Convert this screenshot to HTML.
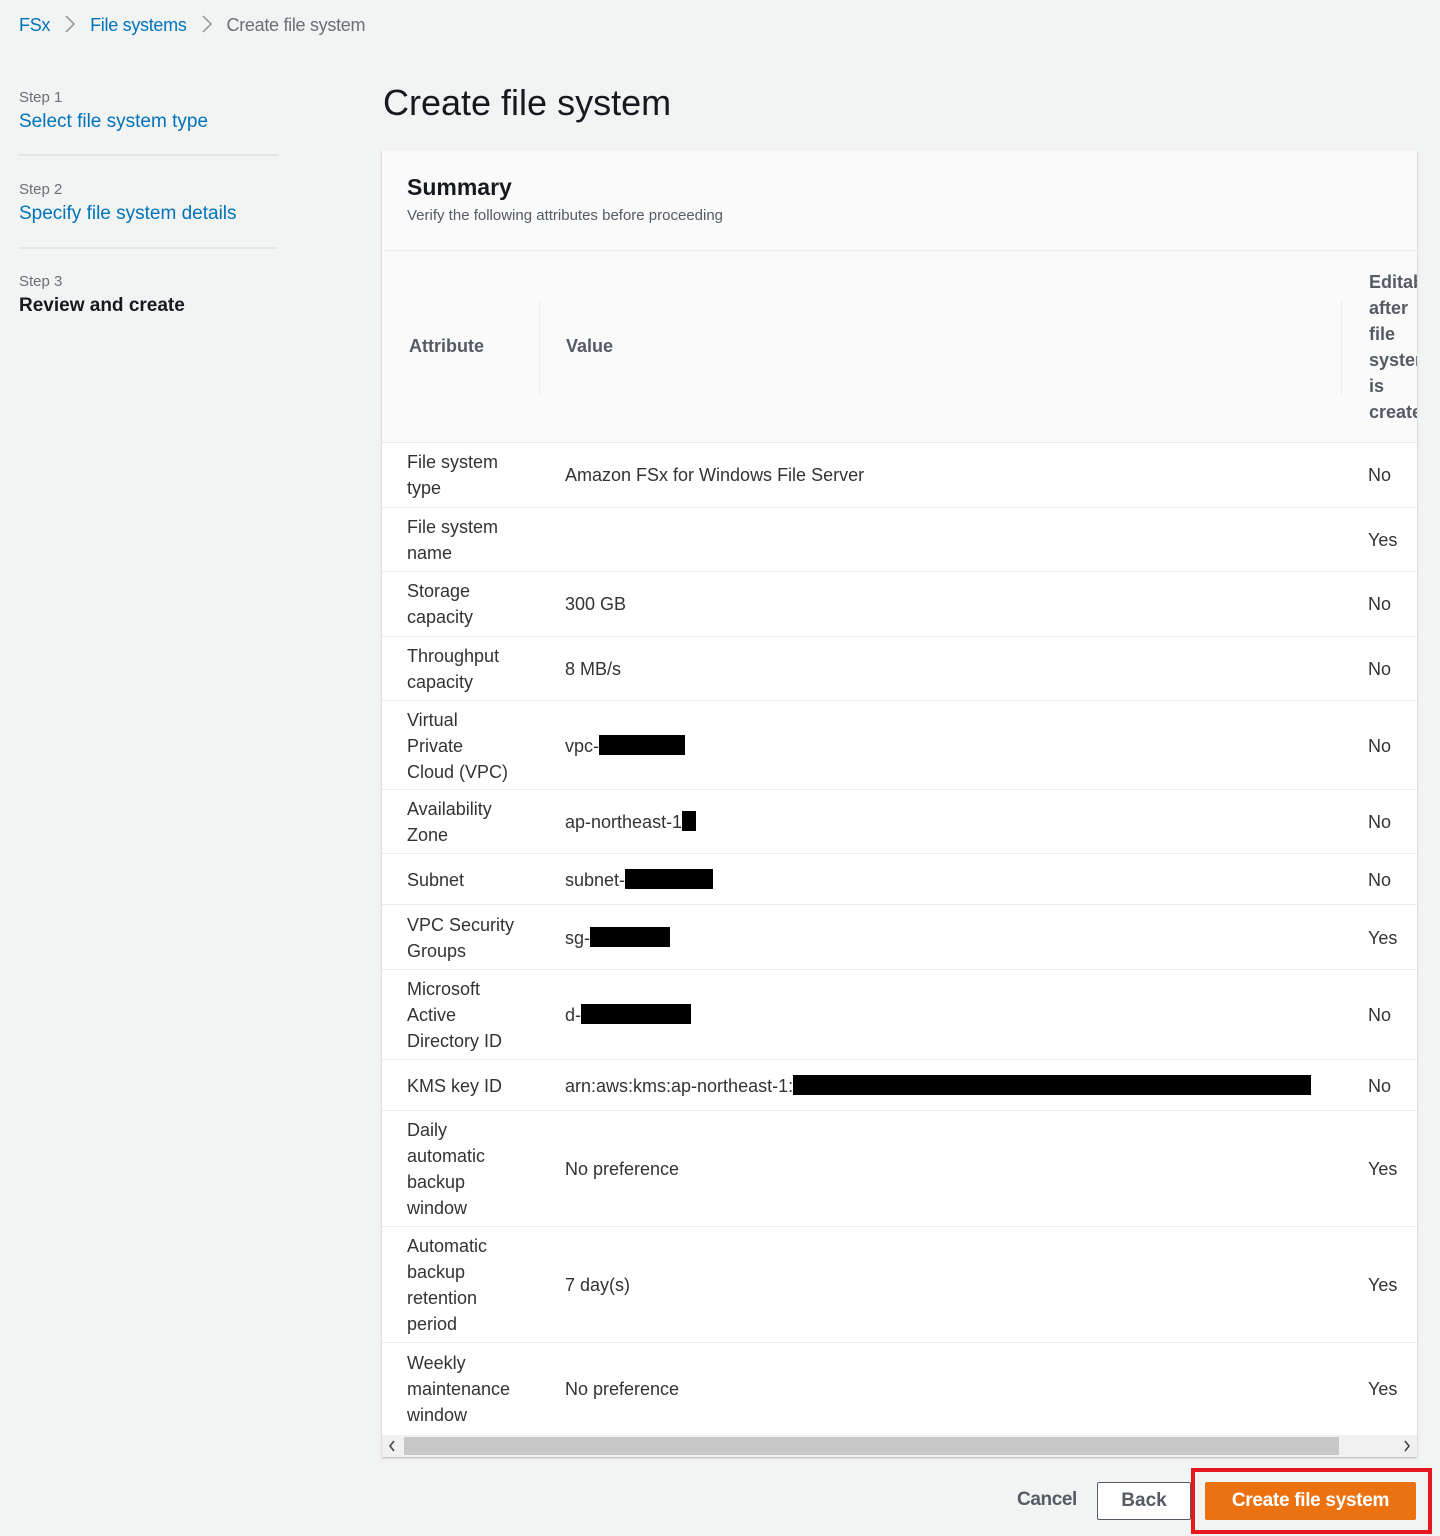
<!DOCTYPE html>
<html><head><style>
body{margin:0;width:1440px;height:1536px;background:#f2f3f3;font-family:"Liberation Sans",sans-serif;color:#16191f;position:relative;overflow:hidden}
.a{position:absolute;white-space:nowrap}
.blue{color:#0073bb}
.card{position:absolute;left:382px;top:150px;width:1035px;height:1307px;background:#fff;box-shadow:0 1px 2px rgba(0,0,0,.25);overflow:hidden}
.row{position:absolute;left:0;width:1035px;border-top:1px solid #eaeded;font-size:18px;color:#333}
.row div{position:absolute;top:50%;transform:translateY(-50%);line-height:26px}
.c1{left:25px}.c2{left:183px}.c3{left:986px}
.blk{display:inline-block;background:#000;height:20px;vertical-align:-3px}
.chev{display:inline-block;vertical-align:-3px;margin:0 14px}
</style></head><body>
<div class="a" style="left:19px;top:14px;font-size:18px;letter-spacing:-0.3px"><span class="blue">FSx</span><svg class="chev" width="12" height="20" viewBox="0 0 12 20"><path d="M2 2 L10 10 L2 18" fill="none" stroke="#879596" stroke-width="1.5"/></svg><span class="blue">File systems</span><svg class="chev" width="12" height="20" viewBox="0 0 12 20"><path d="M2 2 L10 10 L2 18" fill="none" stroke="#879596" stroke-width="1.5"/></svg><span style="color:#687078">Create file system</span></div>
<div class="a" style="left:19px;top:89px;font-size:15px;color:#687078">Step 1</div>
<div class="a blue" style="left:19px;top:111px;font-size:19px">Select file system type</div>
<div class="a" style="left:19px;top:154px;width:259px;height:2px;background:#e4e6e6"></div>
<div class="a" style="left:19px;top:181px;font-size:15px;color:#687078">Step 2</div>
<div class="a blue" style="left:19px;top:203px;font-size:19px">Specify file system details</div>
<div class="a" style="left:19px;top:247px;width:259px;height:2px;background:#e4e6e6"></div>
<div class="a" style="left:19px;top:273px;font-size:15px;color:#687078">Step 3</div>
<div class="a" style="left:19px;top:295px;font-size:19px;font-weight:bold">Review and create</div>
<div class="a" style="left:383px;top:82px;font-size:36px">Create file system</div>
<div class="card">
 <div style="position:absolute;left:0;top:0;width:1035px;height:100px;background:#fafafa;border-bottom:1px solid #eaeded"></div>
 <div class="a" style="left:25px;top:24px;font-size:23px;font-weight:bold">Summary</div>
 <div class="a" style="left:25px;top:57px;font-size:15px;color:#545b64">Verify the following attributes before proceeding</div>
 <div style="position:absolute;left:0;top:101px;width:1035px;height:191px;background:#fafafa"></div>
 <div class="a" style="left:27px;top:186px;font-size:18px;font-weight:bold;color:#545b64">Attribute</div>
 <div class="a" style="left:157px;top:150px;width:1px;height:95px;background:#eaeded"></div>
 <div class="a" style="left:184px;top:186px;font-size:18px;font-weight:bold;color:#545b64">Value</div>
 <div class="a" style="left:959px;top:150px;width:1px;height:95px;background:#eaeded"></div>
 <div class="a" style="left:987px;top:119px;font-size:18px;font-weight:bold;color:#545b64;line-height:26px;white-space:normal;width:60px">Editable after file system is created</div>
 <div class="row" style="top:292px;height:64px"><div class="c1">File system<br>type</div><div class="c2">Amazon FSx for Windows File Server</div><div class="c3">No</div></div>
 <div class="row" style="top:357px;height:64px"><div class="c1">File system<br>name</div><div class="c3">Yes</div></div>
 <div class="row" style="top:421px;height:64px"><div class="c1">Storage<br>capacity</div><div class="c2">300 GB</div><div class="c3">No</div></div>
 <div class="row" style="top:486px;height:64px"><div class="c1">Throughput<br>capacity</div><div class="c2">8 MB/s</div><div class="c3">No</div></div>
 <div class="row" style="top:550px;height:89px"><div class="c1">Virtual<br>Private<br>Cloud (VPC)</div><div class="c2">vpc-<span class="blk" style="width:86px"></span></div><div class="c3">No</div></div>
 <div class="row" style="top:639px;height:64px"><div class="c1">Availability<br>Zone</div><div class="c2">ap-northeast-1<span class="blk" style="width:14px"></span></div><div class="c3">No</div></div>
 <div class="row" style="top:703px;height:51px"><div class="c1">Subnet</div><div class="c2">subnet-<span class="blk" style="width:88px"></span></div><div class="c3">No</div></div>
 <div class="row" style="top:754px;height:65px"><div class="c1">VPC Security<br>Groups</div><div class="c2">sg-<span class="blk" style="width:80px"></span></div><div class="c3">Yes</div></div>
 <div class="row" style="top:819px;height:90px"><div class="c1">Microsoft<br>Active<br>Directory ID</div><div class="c2">d-<span class="blk" style="width:110px"></span></div><div class="c3">No</div></div>
 <div class="row" style="top:909px;height:51px"><div class="c1">KMS key ID</div><div class="c2">arn:aws:kms:ap-northeast-1:<span class="blk" style="width:518px"></span></div><div class="c3">No</div></div>
 <div class="row" style="top:960px;height:116px"><div class="c1">Daily<br>automatic<br>backup<br>window</div><div class="c2">No preference</div><div class="c3">Yes</div></div>
 <div class="row" style="top:1076px;height:116px"><div class="c1">Automatic<br>backup<br>retention<br>period</div><div class="c2">7 day(s)</div><div class="c3">Yes</div></div>
 <div class="row" style="top:1192px;height:92px"><div class="c1">Weekly<br>maintenance<br>window</div><div class="c2">No preference</div><div class="c3">Yes</div></div>
 <div style="position:absolute;left:0;top:1285px;width:1035px;height:22px;background:#f1f1f1"></div>
 <div style="position:absolute;left:22px;top:1287px;width:935px;height:18px;background:#c8c8c8"></div>
 <svg style="position:absolute;left:6px;top:1290px" width="8" height="12"><path d="M6 1 L2 6 L6 11" fill="none" stroke="#444" stroke-width="1.6"/></svg>
 <svg style="position:absolute;left:1021px;top:1290px" width="8" height="12"><path d="M2 1 L6 6 L2 11" fill="none" stroke="#444" stroke-width="1.6"/></svg>
</div>
<div class="a" style="left:1017px;top:1489px;font-size:19px;font-weight:bold;color:#545b64;letter-spacing:-0.4px">Cancel</div>
<div class="a" style="left:1097px;top:1482px;width:92px;height:36px;border:1px solid #545b64;border-radius:2px;background:#fff;font-size:19px;font-weight:bold;color:#545b64;text-align:center;line-height:36px">Back</div>
<div class="a" style="left:1191px;top:1468px;width:241px;height:66px;border:4px solid #e8161e;box-sizing:border-box"></div>
<div class="a" style="left:1205px;top:1482px;width:211px;height:38px;background:#ec7211;border-radius:2px;color:#fff;font-size:19px;font-weight:bold;text-align:center;line-height:38px;letter-spacing:-0.3px">Create file system</div>
</body></html>
